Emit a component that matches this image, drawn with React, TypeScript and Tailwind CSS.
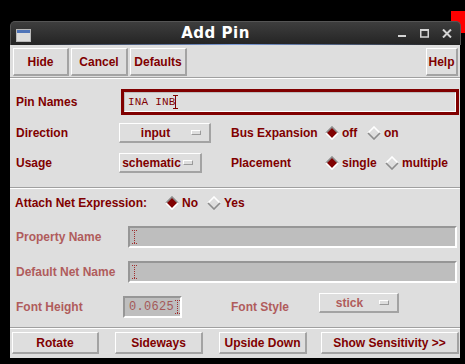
import React from 'react';

const FONT = "font-['Liberation_Sans',Arial,sans-serif]";
const MONO = "font-['Liberation_Mono','Courier_New',monospace]";
// stippled (insensitive) text: half-tone red
const STIPPLE = 'text-[#b05c5c]';
const STIPPLE_FIELD = 'text-[#a45858]';

function Btn({ label, w }: { label: string; w: string }) {
  return (
    <div
      className={`${w} h-full flex items-center justify-center bg-[#dedede] border-t border-l border-t-white border-l-white border-r-2 border-b-2 border-r-[#a3a3a3] border-b-[#a3a3a3] text-[12px] font-bold text-[#800000]`}
    >
      {label}
    </div>
  );
}

function Separator() {
  return (
    <div className="flex flex-col">
      <div className="h-px bg-[#a0a0a0]" />
      <div className="h-px bg-white" />
    </div>
  );
}

function Indicator() {
  return <div className="w-[10px] h-[5px] border-t border-l border-t-white border-l-white border-r border-b border-r-[#9a9a9a] border-b-[#9a9a9a] bg-[#dedede]" />;
}

function OptionMenu({ label, w, pr, stipple }: { label: string; w: string; pr: string; stipple?: boolean }) {
  return (
    <div
      className={`${w} ${pr} h-[20px] flex items-center bg-[#dedede] border-t border-l border-t-white border-l-white border-r-2 border-b-2 border-r-[#a3a3a3] border-b-[#a3a3a3]`}
    >
      <span className={`flex-1 text-center text-[12px] font-bold ${stipple ? STIPPLE : 'text-[#800000]'}`}>{label}</span>
      <Indicator />
    </div>
  );
}

function Diamond({ on }: { on: boolean }) {
  return (
    <svg width="14" height="14" viewBox="0 0 14 14" className="shrink-0">
      {on && <polygon points="7,1 13,7 7,13 1,7" fill="#800000" />}
      <polyline points="1,7 7,1 13,7" fill="none" stroke={on ? '#8c8c8c' : '#ffffff'} strokeWidth="1.6" />
      <polyline points="1,7 7,13 13,7" fill="none" stroke={on ? '#ffffff' : '#8c8c8c'} strokeWidth="1.6" />
    </svg>
  );
}

function Radio({ label, on, w }: { label: string; on: boolean; w?: string }) {
  return (
    <div className={`flex items-center gap-[3px] ${w ?? ''}`}>
      <Diamond on={on} />
      <span className="text-[12px] font-bold text-[#800000]">{label}</span>
    </div>
  );
}

function Cursor({ stipple }: { stipple?: boolean }) {
  const c = stipple ? '#a03030' : '#800000';
  const dash = stipple ? '1 1' : undefined;
  return (
    <svg width="5" height="14" viewBox="0 0 5 14" className="shrink-0">
      <line x1="0" y1="0.5" x2="5" y2="0.5" stroke={c} strokeDasharray={dash} />
      <line x1="2.5" y1="0" x2="2.5" y2="14" stroke={c} strokeDasharray={dash} />
      <line x1="0" y1="13.5" x2="5" y2="13.5" stroke={c} strokeDasharray={dash} />
    </svg>
  );
}

function DisabledField({ w, value }: { w: string; value?: string }) {
  return (
    <div className={`${w} h-full flex items-center gap-[1px] pl-[2px] bg-[#bebebe] border-t-2 border-l-2 border-t-[#969696] border-l-[#969696] border-r-2 border-b-2 border-r-white border-b-white`}>
      {value && <span className={`${MONO} text-[12px] ${STIPPLE_FIELD} pl-[2px] tracking-[0.3px]`}>{value}</span>}
      <Cursor stipple />
    </div>
  );
}

function TitleBar() {
  return (
    <div className="relative h-[24px] w-[451px] rounded-t-[5px] bg-gradient-to-b from-[#3e3e3e] to-[#242424] border-t border-l border-r border-[#555] flex items-center pl-[5px] pr-[8px]">
      <svg width="15" height="13" viewBox="0 0 15 13" className="mt-[3px]">
        <rect x="0.5" y="0.5" width="14" height="12" fill="#dcdcdc" stroke="#b8b8b8" />
        <rect x="1" y="1" width="13" height="3" fill="#4f74b8" />
      </svg>
      <div className="flex-1 text-center text-white text-[15px] font-bold font-['DejaVu_Sans',sans-serif] tracking-[0.5px] pl-[2px]">
        Add Pin
      </div>
      <div className="flex items-center gap-[13px]">
        <svg width="9" height="9" viewBox="0 0 9 9">
          <rect x="0" y="6" width="8" height="2" fill="#d4d4d4" />
        </svg>
        <svg width="9" height="9" viewBox="0 0 9 9">
          <rect x="0.75" y="1" width="7.5" height="7" fill="none" stroke="#d4d4d4" strokeWidth="1.5" />
          <rect x="0" y="0" width="9" height="2" fill="#d4d4d4" />
        </svg>
        <svg width="10" height="9" viewBox="0 0 10 9">
          <path d="M1 0.5 L9 8.5 M9 0.5 L1 8.5" stroke="#d4d4d4" strokeWidth="2" />
        </svg>
      </div>
      <div className="absolute left-[20px] right-[20px] bottom-0 h-px bg-gradient-to-r from-transparent via-[#7a9ad8] to-transparent" />
    </div>
  );
}

export default function App() {
  return (
    <div className={`relative w-[465px] h-[364px] bg-black overflow-hidden ${FONT}`}>
      <div className="absolute left-[451px] top-[11px] w-[14px] h-[22px] bg-[#ff0000]" />
      <div className="relative pl-[10px] pt-[21px]">
        <TitleBar />
        <div className="w-[450px] h-[313px] bg-[#dedede] flex flex-col">
          {/* top buttons */}
          <div className="mt-[3px] h-[28px] flex pl-[3px] pr-[2px] gap-[2px]">
            <Btn label="Hide" w="w-[56px]" />
            <Btn label="Cancel" w="w-[57px]" />
            <Btn label="Defaults" w="w-[57px]" />
            <div className="flex-1" />
            <Btn label="Help" w="w-[32px]" />
          </div>
          <div className="mt-[1px]">
            <Separator />
          </div>

          {/* pin names */}
          <div className="mt-[10px] h-[26px] flex items-center pl-[6px] pr-[1px]">
            <span className="w-[105px] text-[12px] font-bold text-[#800000]">Pin Names</span>
            <div className="flex-1 h-full border-[3px] border-[#800000]">
              <div className="h-full flex items-center pl-[3px] border-t border-l border-t-[#bdbdbd] border-l-[#bdbdbd] border-r border-b border-r-white border-b-white bg-[#dedede]">
                <span className={`${MONO} text-[11px] text-[#800000] tracking-[0.2px]`}>INA INB</span>
                <div className="-ml-[3px]">
                  <Cursor />
                </div>
              </div>
            </div>
          </div>

          {/* direction */}
          <div className="mt-[8px] h-[20px] flex items-center pl-[6px]">
            <span className="w-[103px] text-[12px] font-bold text-[#800000]">Direction</span>
            <OptionMenu label="input" w="w-[92px]" pr="pr-[8px]" />
            <span className="ml-[20px] w-[94px] text-[12px] font-bold text-[#800000]">Bus Expansion</span>
            <Radio label="off" on w="w-[42px]" />
            <Radio label="on" on={false} />
          </div>

          {/* usage */}
          <div className="mt-[10px] h-[20px] flex items-center pl-[6px]">
            <span className="w-[103px] text-[12px] font-bold text-[#800000]">Usage</span>
            <OptionMenu label="schematic" w="w-[83px]" pr="pr-[7px]" />
            <span className="ml-[29px] w-[94px] text-[12px] font-bold text-[#800000]">Placement</span>
            <Radio label="single" on w="w-[60px]" />
            <Radio label="multiple" on={false} />
          </div>

          <div className="mt-[14px]">
            <Separator />
          </div>

          {/* attach net */}
          <div className="mt-[3px] h-[22px] flex items-center pl-[5px]">
            <span className="w-[150px] text-[12px] font-bold text-[#800000]">Attach Net Expression:</span>
            <Radio label="No" on w="w-[42px]" />
            <Radio label="Yes" on={false} />
          </div>

          {/* property name */}
          <div className="mt-[12px] h-[22px] flex items-center pl-[6px]">
            <span className={`w-[112px] text-[12px] font-bold ${STIPPLE}`}>Property Name</span>
            <DisabledField w="w-[329px]" />
          </div>

          {/* default net name */}
          <div className="mt-[13px] h-[22px] flex items-center pl-[6px]">
            <span className={`w-[112px] text-[12px] font-bold ${STIPPLE}`}>Default Net Name</span>
            <DisabledField w="w-[329px]" />
          </div>

          {/* font height */}
          <div className="mt-[10px] h-[25px] flex pl-[6px]">
            <div className="w-[107px] h-[22px] mt-[3px] flex items-center">
              <span className={`text-[12px] font-bold ${STIPPLE}`}>Font Height</span>
            </div>
            <div className="h-[22px] mt-[3px] flex">
              <DisabledField w="w-[59px]" value="0.0625" />
            </div>
            <div className="ml-[49px] w-[88px] h-[22px] mt-[3px] flex items-center">
              <span className={`text-[12px] font-bold ${STIPPLE}`}>Font Style</span>
            </div>
            <OptionMenu label="stick" w="w-[80px]" pr="pr-[8px]" stipple />
          </div>

          <div className="mt-[9px]">
            <Separator />
          </div>

          {/* bottom buttons */}
          <div className="mt-[3px] h-[22px] flex pl-[2px]">
            <Btn label="Rotate" w="w-[87px]" />
            <div className="ml-[16px]">
              <Btn label="Sideways" w="w-[88px]" />
            </div>
            <div className="ml-[16px]">
              <Btn label="Upside Down" w="w-[88px]" />
            </div>
            <div className="ml-[14px]">
              <Btn label="Show Sensitivity >>" w="w-[138px]" />
            </div>
          </div>
        </div>
      </div>
    </div>
  );
}
